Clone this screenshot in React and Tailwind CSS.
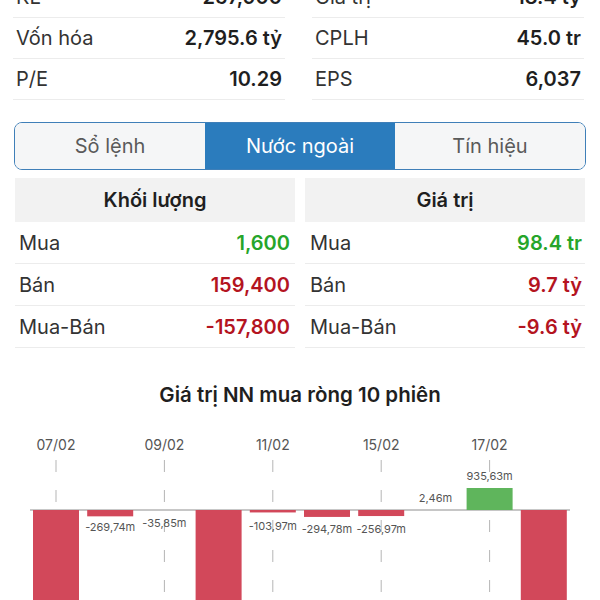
import React from 'react';

const stats = [
  [['KL', '257,900'], ['Giá trị', '18.4 tỷ']],
  [['Vốn hóa', '2,795.6 tỷ'], ['CPLH', '45.0 tr']],
  [['P/E', '10.29'], ['EPS', '6,037']],
];

const foreign = [
  { label: 'Mua', vol: '1,600', val: '98.4 tr', color: 'text-[#26a52a]' },
  { label: 'Bán', vol: '159,400', val: '9.7 tỷ', color: 'text-[#b4141f]' },
  { label: 'Mua-Bán', vol: '-157,800', val: '-9.6 tỷ', color: 'text-[#b4141f]' },
];

// value in millions; big ones run past the bottom of the view
const sessions = [
  { v: -9000, date: '07/02' },
  { v: -269.74, label: '-269,74m' },
  { v: -35.85, label: '-35,85m', date: '09/02' },
  { v: -9000 },
  { v: -103.97, label: '-103,97m', date: '11/02' },
  { v: -294.78, label: '-294,78m' },
  { v: -256.97, label: '-256,97m', date: '15/02' },
  { v: 2.46, label: '2,46m' },
  { v: 935.63, label: '935,63m', date: '17/02' },
  { v: -9000 },
];

const labelY = {
  '-269,74m': 531,
  '-35,85m': 527,
  '-103,97m': 530,
  '-294,78m': 533,
  '-256,97m': 533,
};

function Chart() {
  const axis = 510;
  const scale = 22 / 935.63;
  return (
    <svg width="600" height="193" viewBox="0 407 600 193" className="block">
      {sessions.map((s, i) => {
        const cx = 56 + i * 54.2;
        return s.date ? (
          <g key={'d' + i}>
            <text x={cx} y={450} textAnchor="middle" fontSize="14" fill="#555" fontFamily="Inter, sans-serif">
              {s.date}
            </text>
            <line x1={cx} x2={cx} y1={460} y2={600} stroke="#b5b5b5" strokeWidth="1" strokeDasharray="12 18" />
          </g>
        ) : null;
      })}
      <line x1="30" x2="570" y1={axis} y2={axis} stroke="#8e8e8e" strokeWidth="1" />
      {sessions.map((s, i) => {
        const cx = 56 + i * 54.2;
        const h = Math.abs(s.v) * scale;
        const up = s.v > 0;
        return (
          <g key={'b' + i}>
            {h >= 1 && (
              <rect
                x={cx - 23}
                width="46"
                y={up ? axis - h : axis}
                height={Math.min(h, 120)}
                fill={up ? '#5fb55c' : '#d2485a'}
              />
            )}
            {s.label && (
              <text
                x={cx}
                y={up ? (h > 5 ? axis - h - 8 : 502) : labelY[s.label]}
                textAnchor="middle"
                fontSize="11"
                fill="#555"
                fontFamily="Inter, sans-serif"
              >
                {s.label}
              </text>
            )}
          </g>
        );
      })}
    </svg>
  );
}

export default function App() {
  return (
    <div className="w-[600px] h-[600px] overflow-hidden bg-white font-['Inter',sans-serif]">
      <div className="-mt-[23px] px-[13px] grid grid-cols-[272px_272px] gap-x-[27px]">
        {stats.map((row, r) =>
          row.map(([k, v], c) => (
            <div key={r + '-' + c} className="h-[41px] flex items-center justify-between border-b border-[#ececec] px-[3px]">
              <span className="text-[20px] text-[#333]">{k}</span>
              <span className="text-[20px] font-semibold text-[#1f1f1f]">{v}</span>
            </div>
          ))
        )}
      </div>

      <div className="mx-[14px] mt-[22px] h-[48px] grid grid-cols-3 rounded-[8px] border-[1.5px] border-[#3f7fb8] overflow-hidden">
        <div className="flex items-center justify-center bg-[#f5f6f7] text-[20px] text-[#5a5a5a]">Sổ lệnh</div>
        <div className="flex items-center justify-center bg-[#2b7cbd] text-[20px] text-white">Nước ngoài</div>
        <div className="flex items-center justify-center bg-[#f5f6f7] text-[20px] text-[#5a5a5a]">Tín hiệu</div>
      </div>

      <div className="mx-[15px] mt-[8px] grid grid-cols-2 gap-x-[10px]">
        <div className="h-[44px] flex items-center justify-center bg-[#f2f2f2] text-[20px] font-semibold text-[#1f1f1f]">Khối lượng</div>
        <div className="h-[44px] flex items-center justify-center bg-[#f2f2f2] text-[20px] font-semibold text-[#1f1f1f]">Giá trị</div>
        {foreign.map((f) => (
          <React.Fragment key={f.label}>
            <div className="h-[42px] flex items-center justify-between border-b border-[#ececec] pl-[4px] pr-[5px]">
              <span className="text-[20px] text-[#333]">{f.label}</span>
              <span className={`text-[20px] font-semibold ${f.color}`}>{f.vol}</span>
            </div>
            <div className="h-[42px] flex items-center justify-between border-b border-[#ececec] pl-[5px] pr-[3px]">
              <span className="text-[20px] text-[#333]">{f.label}</span>
              <span className={`text-[20px] font-semibold ${f.color}`}>{f.val}</span>
            </div>
          </React.Fragment>
        ))}
      </div>

      <div className="mt-[35px] h-[24px] flex items-center justify-center text-[20.5px] font-semibold text-[#1f1f1f]">
        Giá trị NN mua ròng 10 phiên
      </div>
      <Chart />
    </div>
  );
}
